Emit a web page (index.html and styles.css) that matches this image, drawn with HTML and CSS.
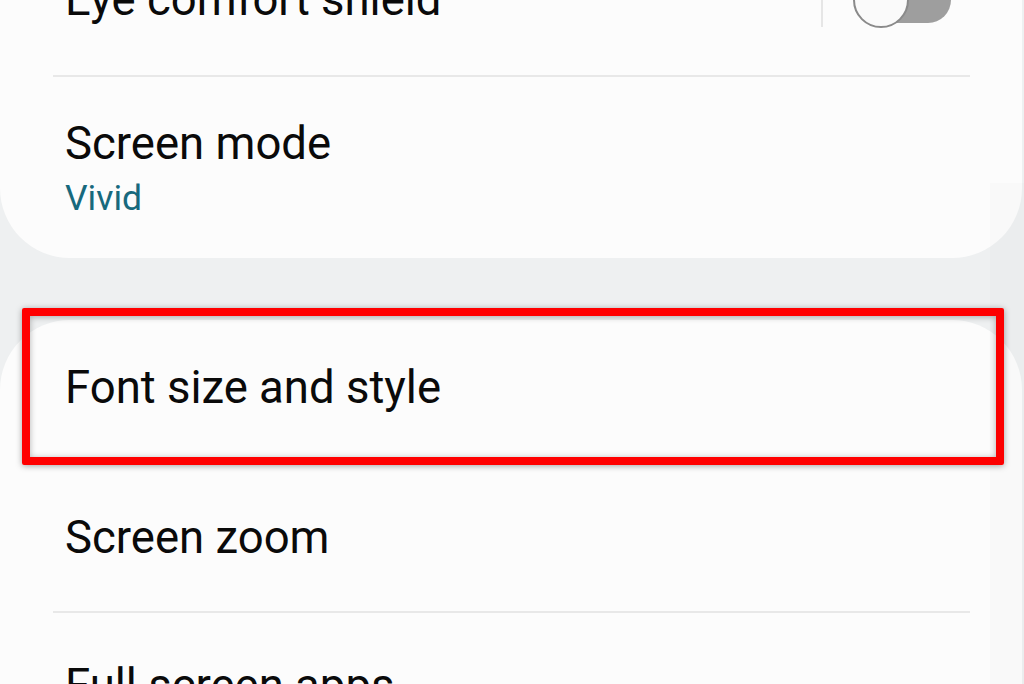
FILE: index.html
```html
<!DOCTYPE html>
<html lang="en">
<head>
  <meta charset="UTF-8">
  <title>Display settings</title>
  <link rel="stylesheet" href="styles.css">
</head>
<body>
  <div class="screen">

    <!-- Card 1: Eye comfort / Screen mode -->
    <div class="card card-top">
      <div class="row row-switch">
        <div class="row-title">Eye comfort shield</div>
        <div class="vline"></div>
        <div class="toggle">
          <div class="track"></div>
          <div class="thumb"></div>
        </div>
      </div>
      <div class="divider"></div>
      <div class="row row-sub">
        <div class="row-title">Screen mode</div>
        <div class="row-value">Vivid</div>
      </div>
    </div>

    <!-- Card 2: Font / Zoom / Full screen -->
    <div class="card card-list">
      <div class="row row-first">
        <div class="row-title">Font size and style</div>
        <div class="highlight"></div>
      </div>
      <div class="divider"></div>
      <div class="row">
        <div class="row-title">Screen zoom</div>
      </div>
      <div class="divider"></div>
      <div class="row">
        <div class="row-title">Full screen apps</div>
      </div>
    </div>

    <div class="scroll-strip"></div>
  </div>
</body>
</html>
```

FILE: styles.css
```css
body {
  margin: 0;
  background-color: #eef0f1;
  font-family: Roboto, "Noto Sans", Arial, sans-serif;
  color: #0a0a0a;
  overflow: hidden;
  height: 684px;
}

.screen {
  position: relative;
  margin-top: -75px;
  height: 900px;
}

.card {
  background-color: #fcfcfc;
  margin-right: 2px;
  border-radius: 70px;
}

.card-top {
  border-radius: 0 0 70px 70px;
}

.card-list {
  margin-top: 62px;
}

.row {
  position: relative;
  padding: 47px 71px 47px 65px;
}

.row-title {
  font-size: 45.5px;
  line-height: 52px;
}

.row-value {
  font-size: 35.5px;
  line-height: 42px;
  color: #17697d;
  margin-top: 7px;
}

.row-switch {
  display: flex;
  align-items: center;
  padding-top: 47px;
  padding-bottom: 47px;
}

.row-switch .row-title {
  flex: 1;
}

.row-sub {
  padding-top: 41px;
  padding-bottom: 39px;
}

.row-first {
  padding-top: 42px;
  padding-bottom: 49px;
}

.divider {
  height: 2px;
  margin: 0 52px 0 53px;
  background-color: #e8e8e8;
}

.vline {
  width: 2px;
  height: 54px;
  background-color: #e6e6e6;
  margin-right: 30px;
}

.toggle {
  position: relative;
  width: 98px;
  height: 56px;
}

.track {
  position: absolute;
  right: 0;
  top: 5px;
  width: 82px;
  height: 46px;
  border-radius: 23px;
  background-color: #9e9e9e;
}

.thumb {
  position: absolute;
  left: 0;
  top: 0;
  width: 56px;
  height: 56px;
  box-sizing: border-box;
  border-radius: 50%;
  border: 2px solid #8a8a8a;
  background-color: #fafafa;
}

.highlight {
  position: absolute;
  left: 22px;
  top: -12px;
  width: 982px;
  height: 157px;
  box-sizing: border-box;
  border: 8px solid #ff0000;
  border-radius: 2px;
  box-shadow: 0 1px 6px rgba(0, 0, 0, 0.35), inset 0 1px 6px rgba(0, 0, 0, 0.3);
}

.scroll-strip {
  position: absolute;
  right: 0;
  top: 258px;
  width: 34px;
  bottom: 0;
  background-color: rgba(0, 0, 0, 0.012);
}
```
